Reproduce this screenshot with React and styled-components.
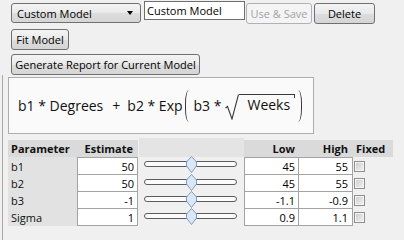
import { Fragment } from 'react';
import styled, { createGlobalStyle } from 'styled-components';

const GlobalStyle = createGlobalStyle`
  html, body {
    margin: 0;
    background: #f0f0f0;
  }
  body {
    font-family: 'Open Sans', 'Liberation Sans', sans-serif;
    font-size: 11px;
    color: #111;
  }
`;

const Page = styled.div`
  width: 404px;
  height: 240px;
  display: flex;
  flex-direction: column;
  overflow: hidden;
`;

const Toolbar = styled.div`
  display: flex;
  align-items: flex-start;
  padding: 1px 0 0 11px;
`;

const ButtonRow = styled.div`
  display: flex;
  padding-left: 11px;
  margin-top: ${(p) => p.$top}px;
`;

const Select = styled.div`
  box-sizing: border-box;
  width: 130px;
  height: 20px;
  margin-top: 2px;
  padding: 0 7px 0 5px;
  display: flex;
  align-items: center;
  justify-content: space-between;
  border: 1px solid #707070;
  border-radius: 3px;
  background: linear-gradient(#f4f4f4, #e9e9e9 50%, #dddddd 52%, #d5d5d5);
  color: #000;
`;

const Arrow = styled.span`
  width: 0;
  height: 0;
  border-left: 3.5px solid transparent;
  border-right: 3.5px solid transparent;
  border-top: 4px solid #000;
`;

const TextField = styled.input`
  box-sizing: border-box;
  width: 101px;
  height: 19px;
  margin: 0 0 0 3px;
  padding: 0 2px;
  border: 1px solid #6f6f6f;
  background: #fff;
  font: inherit;
  color: #000;
  outline: none;
`;

const Button = styled.button`
  box-sizing: border-box;
  width: ${(p) => p.$w}px;
  height: 21px;
  margin: ${(p) => (p.$top ? '2px' : '0')} 0 0 ${(p) => p.$left || 0}px;
  padding: 0;
  border: 1px solid #707070;
  border-radius: 3px;
  background: linear-gradient(#f4f4f4, #e9e9e9 50%, #dddddd 52%, #d5d5d5);
  font: inherit;
  color: #000;
  white-space: nowrap;

  &:disabled {
    border-color: #adb2b5;
    background: #f4f4f4;
    color: #a3a3a3;
  }
`;

const Panel = styled.div`
  flex: 1;
  margin: 0 0 0 2px;
  padding: 2px 0 0 5px;
  border-left: 1px solid #a9a9a9;
`;

const FormulaBox = styled.div`
  box-sizing: border-box;
  width: 306px;
  height: 57px;
  padding-left: 9px;
  display: flex;
  align-items: center;
  border: 1px solid #adadad;
  background: #fafafa;
  font-size: 14px;
  line-height: 20px;
  color: #111;
  white-space: pre;
`;

const Term = styled.span`
  margin-left: ${(p) => p.$left || 0}px;
`;

const Paren = styled.span`
  box-sizing: border-box;
  width: 4px;
  height: 32px;
  margin-left: ${(p) => p.$left}px;
  border: 0 solid #3a3a3a;
  ${(p) =>
    p.$close
      ? 'border-right-width: 1.5px; border-radius: 0 5px 5px 0 / 0 16px 16px 0;'
      : 'border-left-width: 1.5px; border-radius: 5px 0 0 5px / 16px 0 0 16px;'}
`;

const Radical = styled.span`
  display: flex;
  align-items: flex-start;
  height: 26px;
  margin: 2px 0 0 4px;
`;

const Radicand = styled.span`
  position: relative;
  padding: 0 5px 0 8px;
  border-top: 1px solid #3a3a3a;

  &::after {
    content: '';
    position: absolute;
    right: 0;
    top: 0;
    width: 1px;
    height: 3px;
    background: #3a3a3a;
  }
`;

const Table = styled.div`
  display: flex;
  align-items: flex-start;
  margin-top: 4px;
`;

const Grid = styled.div`
  display: grid;
  grid-template-columns: ${(p) => p.$cols};
  grid-template-rows: 17px 18px 17px 17px 17px;
  margin-top: 2px;
`;

const Head = styled.div`
  display: flex;
  align-items: center;
  justify-content: ${(p) => (p.$right ? 'flex-end' : 'flex-start')};
  padding: 0 ${(p) => p.$pr || 0}px 0 ${(p) => p.$pl || 0}px;
  background: #dadada;
  font-weight: 700;
  color: #111;
`;

const Name = styled.div`
  display: flex;
  align-items: center;
  padding-left: 3px;
  background: #e2e2e2;
`;

const Cell = styled.div`
  box-sizing: border-box;
  display: flex;
  align-items: center;
  justify-content: flex-end;
  padding-right: ${(p) => p.$pr || 3}px;
  background: #fff;
  border: 0 solid #a3a3a3;
  border-bottom-width: 1px;
  border-right-width: 1px;
  border-left-width: ${(p) => (p.$first ? 1 : 0)}px;
  border-top-width: ${(p) => (p.$top ? 1 : 0)}px;
  color: #000;
`;

const SliderColumn = styled.div`
  width: 105px;
  display: flex;
  flex-direction: column;
  margin-left: 1px;
`;

const SliderHead = styled.div`
  height: 19px;
  background: #e4e4e4;
`;

const SliderRow = styled.div`
  height: ${(p) => p.$h}px;
  display: flex;
  align-items: center;
  padding-left: 5px;
`;

const Track = styled.div`
  position: relative;
  box-sizing: border-box;
  width: 93px;
  height: 6px;
  margin-bottom: 4px;
  border: 1px solid #5c5c5c;
  border-radius: 3px;
  background: #fbfbfb;
`;

const Thumb = styled.svg`
  position: absolute;
  top: -6px;
  margin-left: -5px;
`;

const CheckCell = styled.div`
  display: flex;
  align-items: center;
  padding-left: 1px;
`;

const Check = styled.span`
  box-sizing: border-box;
  width: 11px;
  height: 11px;
  border: 1px solid #8e8f8f;
  box-shadow: inset 0 0 0 1px #f4f4f4;
  background: linear-gradient(135deg, #cbcbcb, #f3f3f3);
`;

const params = [
  { name: 'b1', est: '50', low: '45', high: '55', v: 50, lo: 45, hi: 55 },
  { name: 'b2', est: '50', low: '45', high: '55', v: 50, lo: 45, hi: 55 },
  { name: 'b3', est: '-1', low: '-1.1', high: '-0.9', v: -1, lo: -1.1, hi: -0.9 },
  { name: 'Sigma', est: '1', low: '0.9', high: '1.1', v: 1, lo: 0.9, hi: 1.1 },
];

function Slider({ value, low, high }) {
  const pos = ((value - low) / (high - low)) * 91;
  return (
    <Track>
      <Thumb width="11" height="17" viewBox="0 0 11 17" style={{ left: pos }}>
        <polygon
          points="5.5,0.5 10.5,6 10.5,10 5.5,16.5 0.5,10 0.5,6"
          fill="#d9e7f7"
          stroke="#7f9dc3"
        />
      </Thumb>
    </Track>
  );
}

export default function App() {
  return (
    <Page>
      <GlobalStyle />
      <Toolbar>
        <Select>
          Custom Model
          <Arrow />
        </Select>
        <TextField readOnly value="Custom Model" />
        <Button $w={66} $left={1} $top disabled>
          Use &amp; Save
        </Button>
        <Button $w={61} $left={2} $top>
          Delete
        </Button>
      </Toolbar>
      <ButtonRow $top={5}>
        <Button $w={58}>Fit Model</Button>
      </ButtonRow>
      <ButtonRow $top={4}>
        <Button $w={189}>Generate Report for Current Model</Button>
      </ButtonRow>
      <Panel>
        <FormulaBox>
          <Term>b1 * Degrees</Term>
          <Term $left={9}>+</Term>
          <Term $left={7}>b2 * Exp</Term>
          <Paren $left={2} />
          <Term $left={5}>b3 *</Term>
          <Radical>
            <svg width="14" height="26" viewBox="0 0 14 26">
              <polyline
                points="0.5,14 2.5,12.5 7,25 13.5,0.5"
                fill="none"
                stroke="#3a3a3a"
                strokeWidth="1.1"
              />
            </svg>
            <Radicand>Weeks</Radicand>
          </Radical>
          <Paren $left={3} $close />
        </FormulaBox>
        <Table>
          <Grid $cols="69px 61px">
            <Head $pl={3}>Parameter</Head>
            <Head $right $pr={5}>Estimate</Head>
            {params.map((p, i) => (
              <Fragment key={p.name}>
                <Name>{p.name}</Name>
                <Cell $first $top={i === 0}>
                  {p.est}
                </Cell>
              </Fragment>
            ))}
          </Grid>
          <SliderColumn>
            <SliderHead />
            {params.map((p, i) => (
              <SliderRow key={p.name} $h={i === 0 ? 18 : 17}>
                <Slider value={p.v} low={p.lo} high={p.hi} />
              </SliderRow>
            ))}
          </SliderColumn>
          <Grid $cols="55px 54px 40px">
            <Head $right $pr={4}>Low</Head>
            <Head $right $pr={5}>High</Head>
            <Head $pl={3}>Fixed</Head>
            {params.map((p, i) => (
              <Fragment key={p.name}>
                <Cell $first $top={i === 0}>
                  {p.low}
                </Cell>
                <Cell $top={i === 0} $pr={4}>
                  {p.high}
                </Cell>
                <CheckCell>
                  <Check />
                </CheckCell>
              </Fragment>
            ))}
          </Grid>
        </Table>
      </Panel>
    </Page>
  );
}
